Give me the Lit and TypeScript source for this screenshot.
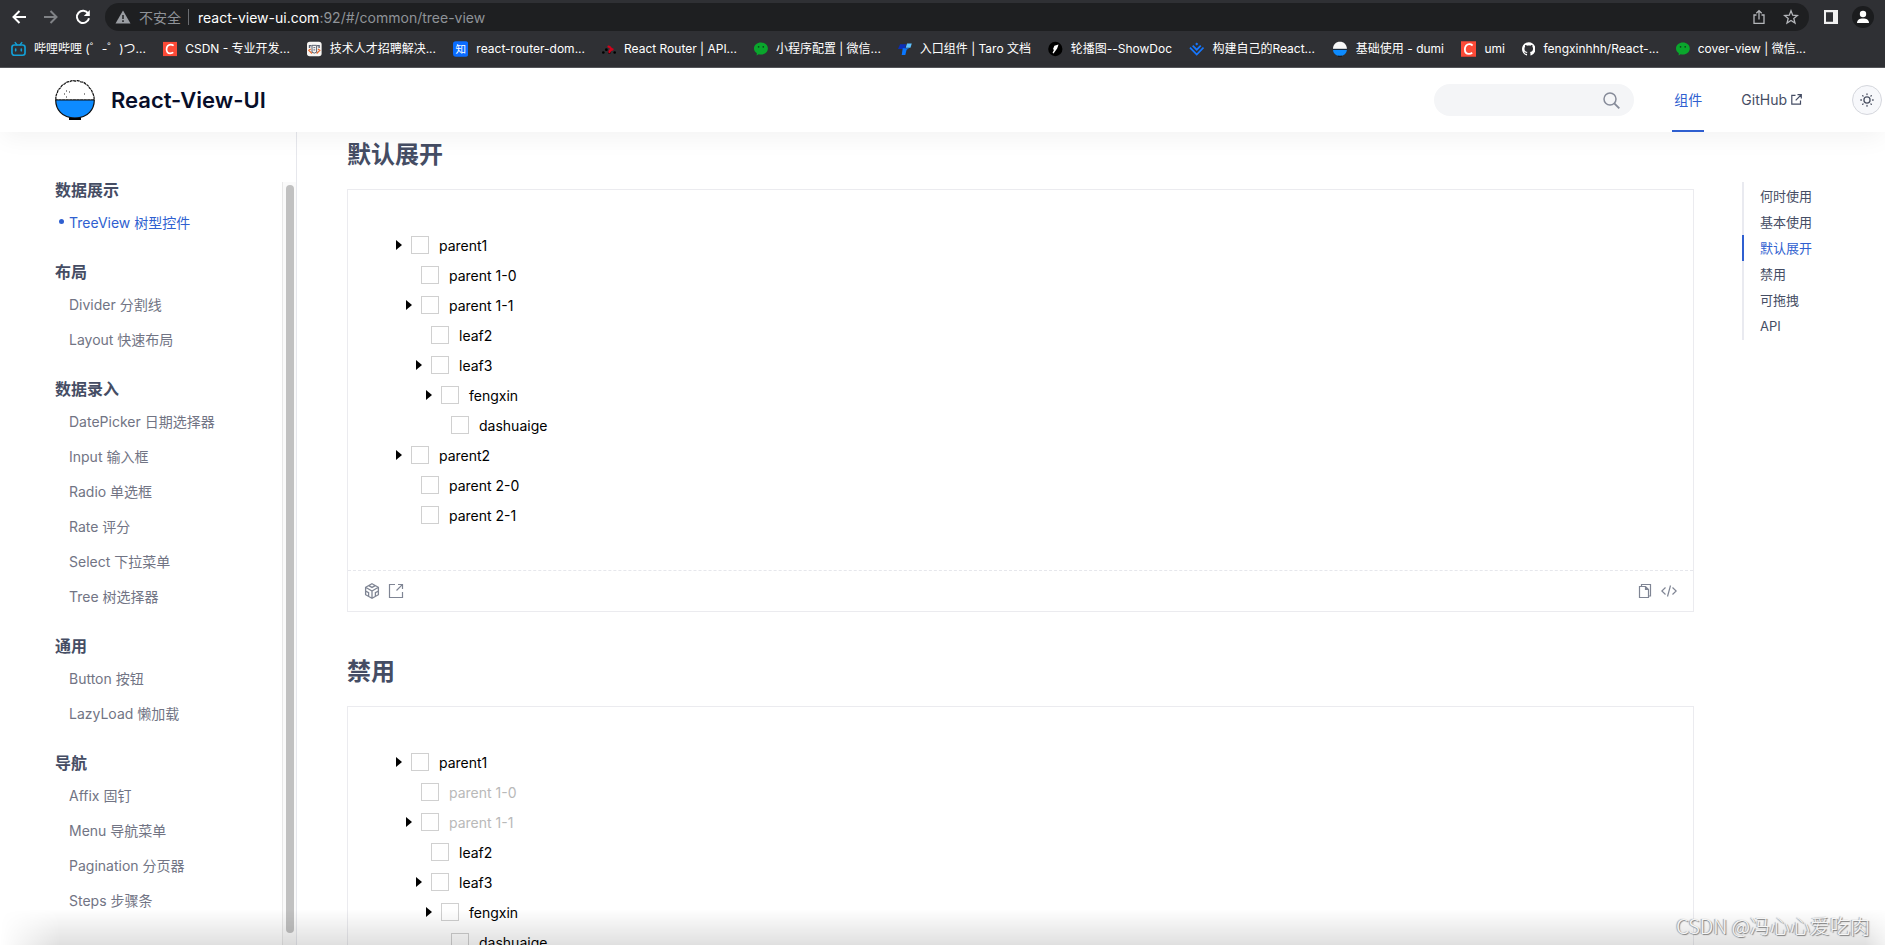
import { LitElement, html, svg, css, nothing } from "lit";
import { customElement, property } from "lit/decorators.js";
import { classMap } from "lit/directives/class-map.js";
import { styleMap } from "lit/directives/style-map.js";

const iconBilibili = svg`<path d="M4.500 1.200 6.300 3.500M11.500 1.200 9.700 3.500" stroke="#139fd6" stroke-width="1.600" stroke-linecap="round"/><rect x="1" y="3.700" width="14" height="11" rx="2.600" fill="none" stroke="#139fd6" stroke-width="1.800"/><path d="M5 8v2M11 8v2" stroke="#139fd6" stroke-width="1.700" stroke-linecap="round"/>`;
const iconCsdn = svg`<path d="M0 0h16v16H0z" fill="#fc4a37"/><path d="M12 4.300C10.800 3.300 9.800 3 8.600 3 5.900 3 4 5.200 4 8.200c0 2.900 1.600 4.800 4.200 4.800 1.300 0 2.500-.4 3.400-1.100" fill="none" stroke="#fff" stroke-width="1.900"/>`;
const iconJob = svg`<rect width="16" height="16" rx="3" fill="#f7f5f3"/><path d="M2 3.500h3v1.500H3.500V7H2zM11 3.500h3V7h-1.500V5H11z" fill="#5b6273"/><path d="M4 8 2 9.500 5.500 13M12 8l2 1.500L10.500 13" fill="none" stroke="#ec6a2c" stroke-width="1.400"/><path d="M5.500 4h5v7.500l-2.500 1-2.500-1zM7 6.500h2M7 9h2" fill="none" stroke="#4d5464" stroke-width="1"/>`;
const iconZhihu = svg`<rect width="16" height="16" rx="3" fill="#0a6cff"/><text x="8" y="12" text-anchor="middle" font-size="11" fill="#fff" font-family="Noto Sans CJK SC, sans-serif">知</text>`;
const iconRouter = svg`<circle cx="1.500" cy="12" r="1.500" fill="#000"/><circle cx="5" cy="8.800" r="1.600" fill="#000"/><circle cx="14.500" cy="12" r="1.500" fill="#000"/><circle cx="8.500" cy="12" r="1.500" fill="#000"/><path d="M7.500 5.300c2.500-.2 1.500 2.700 4.500 3M8.500 11.500c.5-2 1.500-2.800 3-2.700" fill="none" stroke="#d0021b" stroke-width="2.600" stroke-linecap="round"/>`;
const iconWechat = svg`<path d="M8 .5c4.400 0 8 3 8 6.900s-3.600 7-8 7c-.9 0-1.800-.1-2.600-.4L3 15.500l.3-2.700C1.300 11.600 0 9.600 0 7.400 0 3.500 3.600.5 8 .5z" fill="#0aa62c"/><circle cx="5.300" cy="5.500" r="1" fill="#08471a"/><circle cx="10.700" cy="5.500" r="1" fill="#08471a"/>`;
const iconTaro = svg`<path d="M2.500 2.500h7L8 8H0z" fill="#0b2fb8"/><path d="M10.500 1.500H16l-1.500 5H9z" fill="#5ec2ff"/><path d="M5.500 7H13l-3 2-1.500 6H4.300z" fill="#0a77ff"/>`;
const iconShowdoc = svg`<circle cx="8" cy="8" r="7.800" fill="#000"/><path d="M7 4.500 11.500 3 10 7.500 6 13l-1-1 1.500-3-1-1z" fill="#fff"/>`;
const iconBuild = svg`<path d="M8 1.300 9.600 2.900 8 4.500 6.400 2.900z" fill="#1677ff"/><path d="M1 6.500l7 7.200 7-7.200M3.800 4.500 8 8.700l4.200-4.200" fill="none" stroke="#1677ff" stroke-width="1.800"/>`;
const iconBowl = svg`<path d="M1 8C1 3.500 4 .8 8 .8S15 3.500 15 8z" fill="#f8f8f8"/><path d="M1 8.500h14c0 3.500-2.600 6.500-7 6.500s-7-3-7-6.500z" fill="#0d8bff"/><path d="M1 8.300h14M6 15.300h4" stroke="#10131a" stroke-width=".9"/>`;
const iconGithub = svg`<path fill="#fff" d="M8 0C3.580 0 0 3.580 0 8c0 3.540 2.290 6.530 5.470 7.590.4.070.55-.17.55-.38 0-.19-.01-.82-.01-1.490-2.010.37-2.530-.49-2.690-.94-.09-.23-.48-.94-.82-1.130-.28-.15-.68-.52-.01-.53.63-.01 1.080.58 1.230.82.72 1.210 1.870.87 2.330.66.07-.52.28-.87.51-1.070-1.780-.2-3.640-.89-3.640-3.950 0-.87.31-1.590.82-2.150-.08-.2-.36-1.020.08-2.120 0 0 .67-.21 2.200.82.64-.18 1.320-.27 2-.27s1.360.09 2 .27c1.530-1.040 2.200-.82 2.200-.82.44 1.100.16 1.920.08 2.120.51.56.82 1.270.82 2.150 0 3.070-1.870 3.750-3.650 3.950.29.25.54.73.54 1.480 0 1.070-.01 1.930-.01 2.200 0 .21.15.46.55.38A8.010 8.010 0 0 0 16 8c0-4.420-3.580-8-8-8z"/>`;

interface Bookmark { label: string; icon: unknown; width: number; }
const bookmarks: Bookmark[] = [
  { label: "哔哩哔哩 (゜-゜)つ...", icon: iconBilibili, width: 135 },
  { label: "CSDN - 专业开发...", icon: iconCsdn, width: 127 },
  { label: "技术人才招聘解决...", icon: iconJob, width: 129 },
  { label: "react-router-dom...", icon: iconZhihu, width: 132 },
  { label: "React Router | API...", icon: iconRouter, width: 135 },
  { label: "小程序配置 | 微信...", icon: iconWechat, width: 127 },
  { label: "入口组件 | Taro 文档", icon: iconTaro, width: 133 },
  { label: "轮播图--ShowDoc", icon: iconShowdoc, width: 124 },
  { label: "构建自己的React...", icon: iconBuild, width: 126 },
  { label: "基础使用 - dumi", icon: iconBowl, width: 112 },
  { label: "umi", icon: iconCsdn, width: 44 },
  { label: "fengxinhhh/React-...", icon: iconGithub, width: 137 },
  { label: "cover-view | 微信...", icon: iconWechat, width: 130 },
];

const menu = [
  { title: "数据展示", items: ["TreeView 树型控件"] },
  { title: "布局", items: ["Divider 分割线", "Layout 快速布局"] },
  { title: "数据录入", items: ["DatePicker 日期选择器", "Input 输入框", "Radio 单选框", "Rate 评分", "Select 下拉菜单", "Tree 树选择器"] },
  { title: "通用", items: ["Button 按钮", "LazyLoad 懒加载"] },
  { title: "导航", items: ["Affix 固钉", "Menu 导航菜单", "Pagination 分页器", "Steps 步骤条"] },
];
const activeItem = "TreeView 树型控件";

const anchors = ["何时使用", "基本使用", "默认展开", "禁用", "可拖拽", "API"];
const activeAnchor = "默认展开";

interface TreeNode { label: string; disabled?: boolean; children?: TreeNode[]; }
const makeTree = (disabled: boolean): TreeNode[] => [
  {
    label: "parent1",
    children: [
      { label: "parent 1-0", disabled },
      {
        label: "parent 1-1",
        disabled,
        children: [
          { label: "leaf2" },
          { label: "leaf3", children: [{ label: "fengxin", children: [{ label: "dashuaige" }] }] },
        ],
      },
    ],
  },
  { label: "parent2", children: [{ label: "parent 2-0" }, { label: "parent 2-1" }] },
];

const fontStack = css`Inter, "Noto Sans CJK SC", sans-serif`;

@customElement("browser-bar")
class BrowserBar extends LitElement {
  static styles = css`
    :host { display: block; flex: none; background: #2f3034; border-bottom: 1px solid #55565a; color: #fff; font-family: ${fontStack}; }
    .toolbar { display: flex; align-items: center; height: 28px; padding: 3px 11px 0; }
    button { display: flex; padding: 0; border: 0; background: none; color: inherit; }
    .nav { display: flex; gap: 16px; }
    .off { color: #808286; }
    .omnibox { flex: 1; display: flex; align-items: center; height: 28px; margin: 0 15px 0 14px; padding: 0 10px; border-radius: 14px; background: #1e1f21; font-size: 14px; color: #8f9398; box-sizing: border-box; }
    .warn { margin-right: 8px; }
    .sep { width: 1px; height: 16px; margin: 0 9px 0 7px; background: #6a6c70; }
    .url { flex: 1; white-space: nowrap; }
    .host { color: #fff; }
    .tools { display: flex; gap: 16px; color: #b4b6ba; }
    .right { display: flex; align-items: center; gap: 14px; }
    .avatar { align-items: center; justify-content: center; width: 22px; height: 22px; border-radius: 50%; background: #1b1c1e; }
    .marks { display: flex; align-items: center; gap: 17px; height: 36px; padding-left: 11px; overflow: hidden; }
    .mark { flex: none; display: flex; align-items: center; gap: 8px; font-size: 12px; line-height: 16px; color: #fff; white-space: nowrap; text-decoration: none; }
  `;
  render() {
    return html`
      <div class="toolbar">
        <div class="nav">
          <button aria-label="后退"><svg width="16" height="16" viewBox="0 0 16 16" fill="none" stroke="currentColor" stroke-width="2"><path d="M15 8H2.500M8.500 2 2.500 8l6 6"/></svg></button>
          <button class="off" aria-label="前进"><svg width="16" height="16" viewBox="0 0 16 16" fill="none" stroke="currentColor" stroke-width="2"><path d="M1 8h12.500M7.500 2l6 6-6 6"/></svg></button>
          <button aria-label="刷新"><svg width="16" height="16" viewBox="0 0 16 16"><path d="M13.200 4.600A6.100 6.100 0 1 0 14 9.200" fill="none" stroke="currentColor" stroke-width="2"/><path d="M14.800 1v6H8.800z" fill="currentColor"/></svg></button>
        </div>
        <div class="omnibox">
          <svg class="warn" width="16" height="16" viewBox="0 0 16 16"><path d="M8 1.500 15.500 14.500H.5z" fill="#9a9da2"/><path d="M8 6v4M8 11.300v1.700" stroke="#1e1f21" stroke-width="1.500"/></svg>
          <span>不安全</span><span class="sep"></span>
          <span class="url"><span class="host">react-view-ui.com</span>:92/#/common/tree-view</span>
          <div class="tools">
            <button aria-label="分享"><svg width="16" height="16" viewBox="0 0 16 16" fill="none" stroke="currentColor" stroke-width="1.300"><path d="M5.500 6H3v8.300h10V6h-2.500M8 10.500V1.800M5.300 4.300 8 1.600l2.700 2.700"/></svg></button>
            <button aria-label="收藏"><svg width="16" height="16" viewBox="0 0 16 16" fill="none" stroke="currentColor" stroke-width="1.300"><path d="m8 1.800 1.700 4.400 4.700.3-3.600 3 1.200 4.600L8 11.500l-4 2.600 1.200-4.600-3.600-3 4.700-.3z"/></svg></button>
          </div>
        </div>
        <div class="right">
          <button aria-label="侧边栏"><svg width="14" height="14" viewBox="0 0 14 14"><path d="M0 0h14v14H0zM2 2.300v9.400h7V2.300z" fill="#f1f1f1" fill-rule="evenodd"/></svg></button>
          <button class="avatar" aria-label="用户"><svg width="14" height="14" viewBox="0 0 14 14" fill="#fff"><circle cx="7" cy="4" r="3.200"/><path d="M1 13c0-3.200 2.500-4.600 6-4.600s6 1.400 6 4.600z"/></svg></button>
        </div>
      </div>
      <nav class="marks" aria-label="书签">
        ${bookmarks.map((b) => html`<a class="mark" href="#" style=${styleMap({ width: `${b.width}px` })}><svg width="16" height="16" viewBox="0 0 16 16" aria-hidden="true">${b.icon}</svg><span>${b.label}</span></a>`)}
      </nav>`;
  }
}

@customElement("site-header")
class SiteHeader extends LitElement {
  static styles = css`
    :host { display: flex; align-items: center; flex: none; position: relative; z-index: 2; height: 64px; padding: 0 3px 0 55px; box-sizing: border-box; background: #fff; box-shadow: 0 8px 24px -2px rgba(0, 0, 0, 0.05); font-family: ${fontStack}; }
    .brand { display: flex; align-items: center; gap: 16px; flex: 1; color: #080e29; font-size: 22px; font-weight: 600; line-height: 64px; text-decoration: none; }
    .search { display: flex; align-items: center; width: 200px; height: 32px; padding: 0 14px 0 16px; margin-right: 38px; border-radius: 16px; background: #f4f5f7; box-sizing: border-box; }
    input { flex: 1; min-width: 0; padding: 0; border: 0; outline: 0; background: none; font: inherit; font-size: 14px; }
    .link { display: flex; align-items: center; height: 64px; box-sizing: border-box; padding: 0 2px; gap: 4px; border-bottom: 2px solid transparent; color: #454d64; font-size: 14px; text-decoration: none; }
    .on { color: #2f5fd0; border-bottom-color: #2f5fd0; }
    .git { margin: 0 48px 0 35px; }
    .theme { display: flex; align-items: center; justify-content: center; width: 30px; height: 30px; padding: 0; border: 1px solid #d5d7dd; border-radius: 50%; background: #f7f8fb; box-sizing: border-box; }
  `;
  render() {
    return html`
      <a class="brand" href="#">
        <svg width="40" height="40" viewBox="0 0 40 40" aria-hidden="true">
          <path d="M1 20C.5 17 1.200 14.500 2.500 12.300c.2-2 1.500-3.600 3.200-4.600.4-1.900 2-3.200 3.900-3.700C11 2.200 13 1.300 15 1.600c1.700-1.200 3.700-1.300 5.300-.5 1.800-.8 3.900-.5 5.400.7 2-.1 3.900.8 5 2.400 1.800.6 3.200 2 3.700 3.800 1.600 1.100 2.700 2.700 3 4.600C38.700 15 39.400 17.500 39 20z" fill="#fff" stroke="#111" stroke-width="1.200" stroke-dasharray="3 .6"/>
          <path d="M.7 20h38.600c0 9-6 18-19.300 18S.7 29 .7 20z" fill="#0d8bff" stroke="#111" stroke-width="1.200"/>
          <path d="M14 39h12" stroke="#000" stroke-width="2.400"/>
          <path d="M11 11h1M9 14h1M14 12h1M11 17h1M29 14h1" stroke="#222" stroke-width="1.200"/>
        </svg>
        <span>React-View-UI</span>
      </a>
      <label class="search"><input type="text" aria-label="搜索" /><svg width="17" height="17" viewBox="0 0 17 17" fill="none" stroke="#868b99" stroke-width="1.500"><circle cx="7" cy="7" r="6"/><path d="m11.300 11.300 5 5" stroke-width="1.900"/></svg></label>
      <a class="link on" href="#">组件</a>
      <a class="link git" href="#">GitHub<svg width="11" height="11" viewBox="0 0 11 11" fill="none" stroke="#454d64" stroke-width="1.200"><path d="M4.500 1.300H.8v8.900h8.700V6.500M6.500.7h3.800v3.800M10 1 4.700 6.300"/></svg></a>
      <button class="theme" aria-label="切换主题"><svg width="14" height="14" viewBox="0 0 16 16" fill="none" stroke="#4d5364" stroke-width="1.500"><circle cx="8" cy="8" r="3.500"/><path d="M8 .9v.8M8 14.300v.8M.9 8h.8M14.300 8h.8M3 3l.5.500M12.500 12.500l.5.500M3 13l.5-.5M12.500 3.500l.5-.5" stroke-linecap="round"/></svg></button>`;
  }
}

@customElement("side-menu")
class SideMenu extends LitElement {
  static styles = css`
    :host { display: flex; flex: none; width: 297px; box-sizing: border-box; padding-top: 50px; border-right: 1px solid #e6e7ec; font-family: ${fontStack}; }
    nav { flex: 1; padding-left: 55px; }
    .group { padding-bottom: 25px; }
    h2 { margin: 0; font-size: 16px; font-weight: 600; line-height: 16px; color: #454d64; }
    ul { margin: 6px 0 0; padding: 0; list-style: none; }
    a { display: flex; align-items: center; height: 35px; padding-left: 14px; color: #717484; font-size: 14px; text-decoration: none; }
    .on { color: #2f5fd0; padding-left: 4px; gap: 5px; }
    .on::before { content: ""; width: 5px; height: 5px; border-radius: 50%; background: #2f5fd0; }
    .track { width: 14px; box-sizing: border-box; padding: 3px 2px 12px 3px; border-left: 1px solid #e8e8e8; background: #fafafa; }
    .thumb { width: 8px; height: 100%; border-radius: 4px; background: #c1c1c1; }
  `;
  render() {
    return html`
      <nav>
        ${menu.map((g) => html`<div class="group"><h2>${g.title}</h2><ul>${g.items.map((i) => html`<li><a href="#" class=${classMap({ on: i === activeItem })}>${i}</a></li>`)}</ul></div>`)}
      </nav>
      <div class="track"><div class="thumb"></div></div>`;
  }
}

@customElement("tree-view")
class TreeView extends LitElement {
  @property({ attribute: false }) nodes: TreeNode[] = [];
  static styles = css`
    :host { display: block; padding: 40px 38px; font-family: ${fontStack}; }
    ul { margin: 0; padding: 0; list-style: none; }
    ul ul { padding-left: 10px; }
    .row { display: flex; align-items: center; height: 30px; }
    .toggle { display: flex; align-items: center; width: 25px; height: 20px; padding: 0 0 0 10px; border: 0; background: none; box-sizing: border-box; }
    .space { width: 25px; }
    label { display: flex; align-items: center; gap: 10px; font-size: 14px; color: #000; }
    input { appearance: none; width: 18px; height: 18px; margin: 0; border: 1px solid #d0d0d0; background: #fff; box-sizing: border-box; }
    .off { color: #b9b9b9; }
  `;
  private branch(nodes: TreeNode[]): unknown {
    return html`<ul>${nodes.map((n) => html`<li>
      <div class="row">
        ${n.children
          ? html`<button class="toggle" aria-label="展开"><svg width="6" height="10" viewBox="0 0 6 10"><path d="M0 0 6 5 0 10z"/></svg></button>`
          : html`<span class="space"></span>`}
        <label class=${classMap({ off: !!n.disabled })}><input type="checkbox" ?disabled=${n.disabled} />${n.label}</label>
      </div>
      ${n.children ? this.branch(n.children) : nothing}
    </li>`)}</ul>`;
  }
  render() { return this.branch(this.nodes); }
}

@customElement("demo-block")
class DemoBlock extends LitElement {
  @property() heading = "";
  @property({ attribute: false }) nodes: TreeNode[] = [];
  static styles = css`
    :host { display: block; font-family: ${fontStack}; }
    h2 { margin: 0 0 18px; font-size: 24px; font-weight: 600; line-height: 32px; color: #454d64; }
    .box { border: 1px solid #ebebef; }
    .bar { display: flex; align-items: center; gap: 8px; height: 40px; padding: 0 16px; border-top: 1px dashed #e6e7ec; color: #7f8594; }
    .fill { flex: 1; }
    button { display: flex; padding: 0; border: 0; background: none; color: inherit; }
  `;
  render() {
    return html`
      <h2>${this.heading}</h2>
      <div class="box">
        <tree-view .nodes=${this.nodes}></tree-view>
        <div class="bar">
          <button aria-label="CodeSandbox"><svg width="16" height="16" viewBox="0 0 16 16" fill="none" stroke="currentColor" stroke-width="1.300"><path d="M8 .8 14.400 4.300v7.400L8 15.200 1.600 11.700V4.300zM1.600 4.300 8 8l6.400-3.700M8 8v7.200M4.800 2.600 8 4.400l3.200-1.800M1.600 8l3 1.700v3.600M14.400 8l-3 1.700v3.600"/></svg></button>
          <button aria-label="新窗口打开"><svg width="16" height="16" viewBox="0 0 16 16" fill="none" stroke="currentColor" stroke-width="1.200"><path d="M7 1.500H1.500v13h13V9M10 1.500h4.500V6M14.300 1.700 8.500 7.500"/></svg></button>
          <span class="fill"></span>
          <button aria-label="复制"><svg width="16" height="16" viewBox="0 0 16 16" fill="none" stroke="currentColor" stroke-width="1.200"><path d="M4.500 3V1.500h9v11.500h-2M2.500 3.500h6l3 3v8h-9zM8.500 3.500v3h3"/></svg></button>
          <button aria-label="代码"><svg width="16" height="16" viewBox="0 0 16 16" fill="none" stroke="currentColor" stroke-width="1.200"><path d="M4.500 4.500.8 8l3.700 3.500M11.500 4.500 15.200 8l-3.700 3.500M9.500 2.500l-3 11"/></svg></button>
        </div>
      </div>`;
  }
}

@customElement("page-toc")
class PageToc extends LitElement {
  static styles = css`
    :host { display: block; flex: none; width: 143px; padding-top: 50px; font-family: ${fontStack}; }
    nav { padding: 1px 0; background: linear-gradient(#e9eaf0, #e9eaf0) left / 2px 100% no-repeat; }
    a { display: block; padding-left: 16px; border-left: 2px solid transparent; font-size: 13px; line-height: 26px; color: #454d64; text-decoration: none; }
    .on { color: #2f5fd0; border-left-color: #2f5fd0; }
  `;
  render() {
    return html`<nav>${anchors.map((a) => html`<a href="#" class=${classMap({ on: a === activeAnchor })}>${a}</a>`)}</nav>`;
  }
}

@customElement("app-root")
class AppRoot extends LitElement {
  static styles = css`
    :host { display: flex; flex-direction: column; height: 100vh; overflow: hidden; position: relative; background: #fff; }
    .body { display: flex; flex: 1; min-height: 0; }
    main { flex: 1; display: flex; flex-direction: column; gap: 44px; padding: 7px 48px 0 50px; overflow: hidden; }
    demo-block { flex: none; }
    .fade { position: absolute; z-index: 3; left: 0; right: 0; bottom: 0; height: 36px; pointer-events: none; background: linear-gradient(rgba(0, 0, 0, 0), rgba(0, 0, 0, 0.12)); mask-image: linear-gradient(90deg, transparent, #000 60px, #000 calc(100% - 20px), rgba(0, 0, 0, 0.4)); }
    .mark { position: absolute; z-index: 4; right: 15px; bottom: 5px; font: 300 20px/28px "Noto Sans CJK SC", sans-serif; color: #f6f6f6; text-shadow: -1px 0 1px #999, 1px 1px 1px #777; white-space: nowrap; }
  `;
  render() {
    return html`
      <browser-bar></browser-bar>
      <site-header></site-header>
      <div class="body">
        <side-menu></side-menu>
        <main>
          <demo-block heading="默认展开" .nodes=${makeTree(false)}></demo-block>
          <demo-block heading="禁用" .nodes=${makeTree(true)}></demo-block>
        </main>
        <page-toc></page-toc>
      </div>
      <div class="fade"></div>
      <div class="mark">CSDN @冯心心爱吃肉</div>`;
  }
}
